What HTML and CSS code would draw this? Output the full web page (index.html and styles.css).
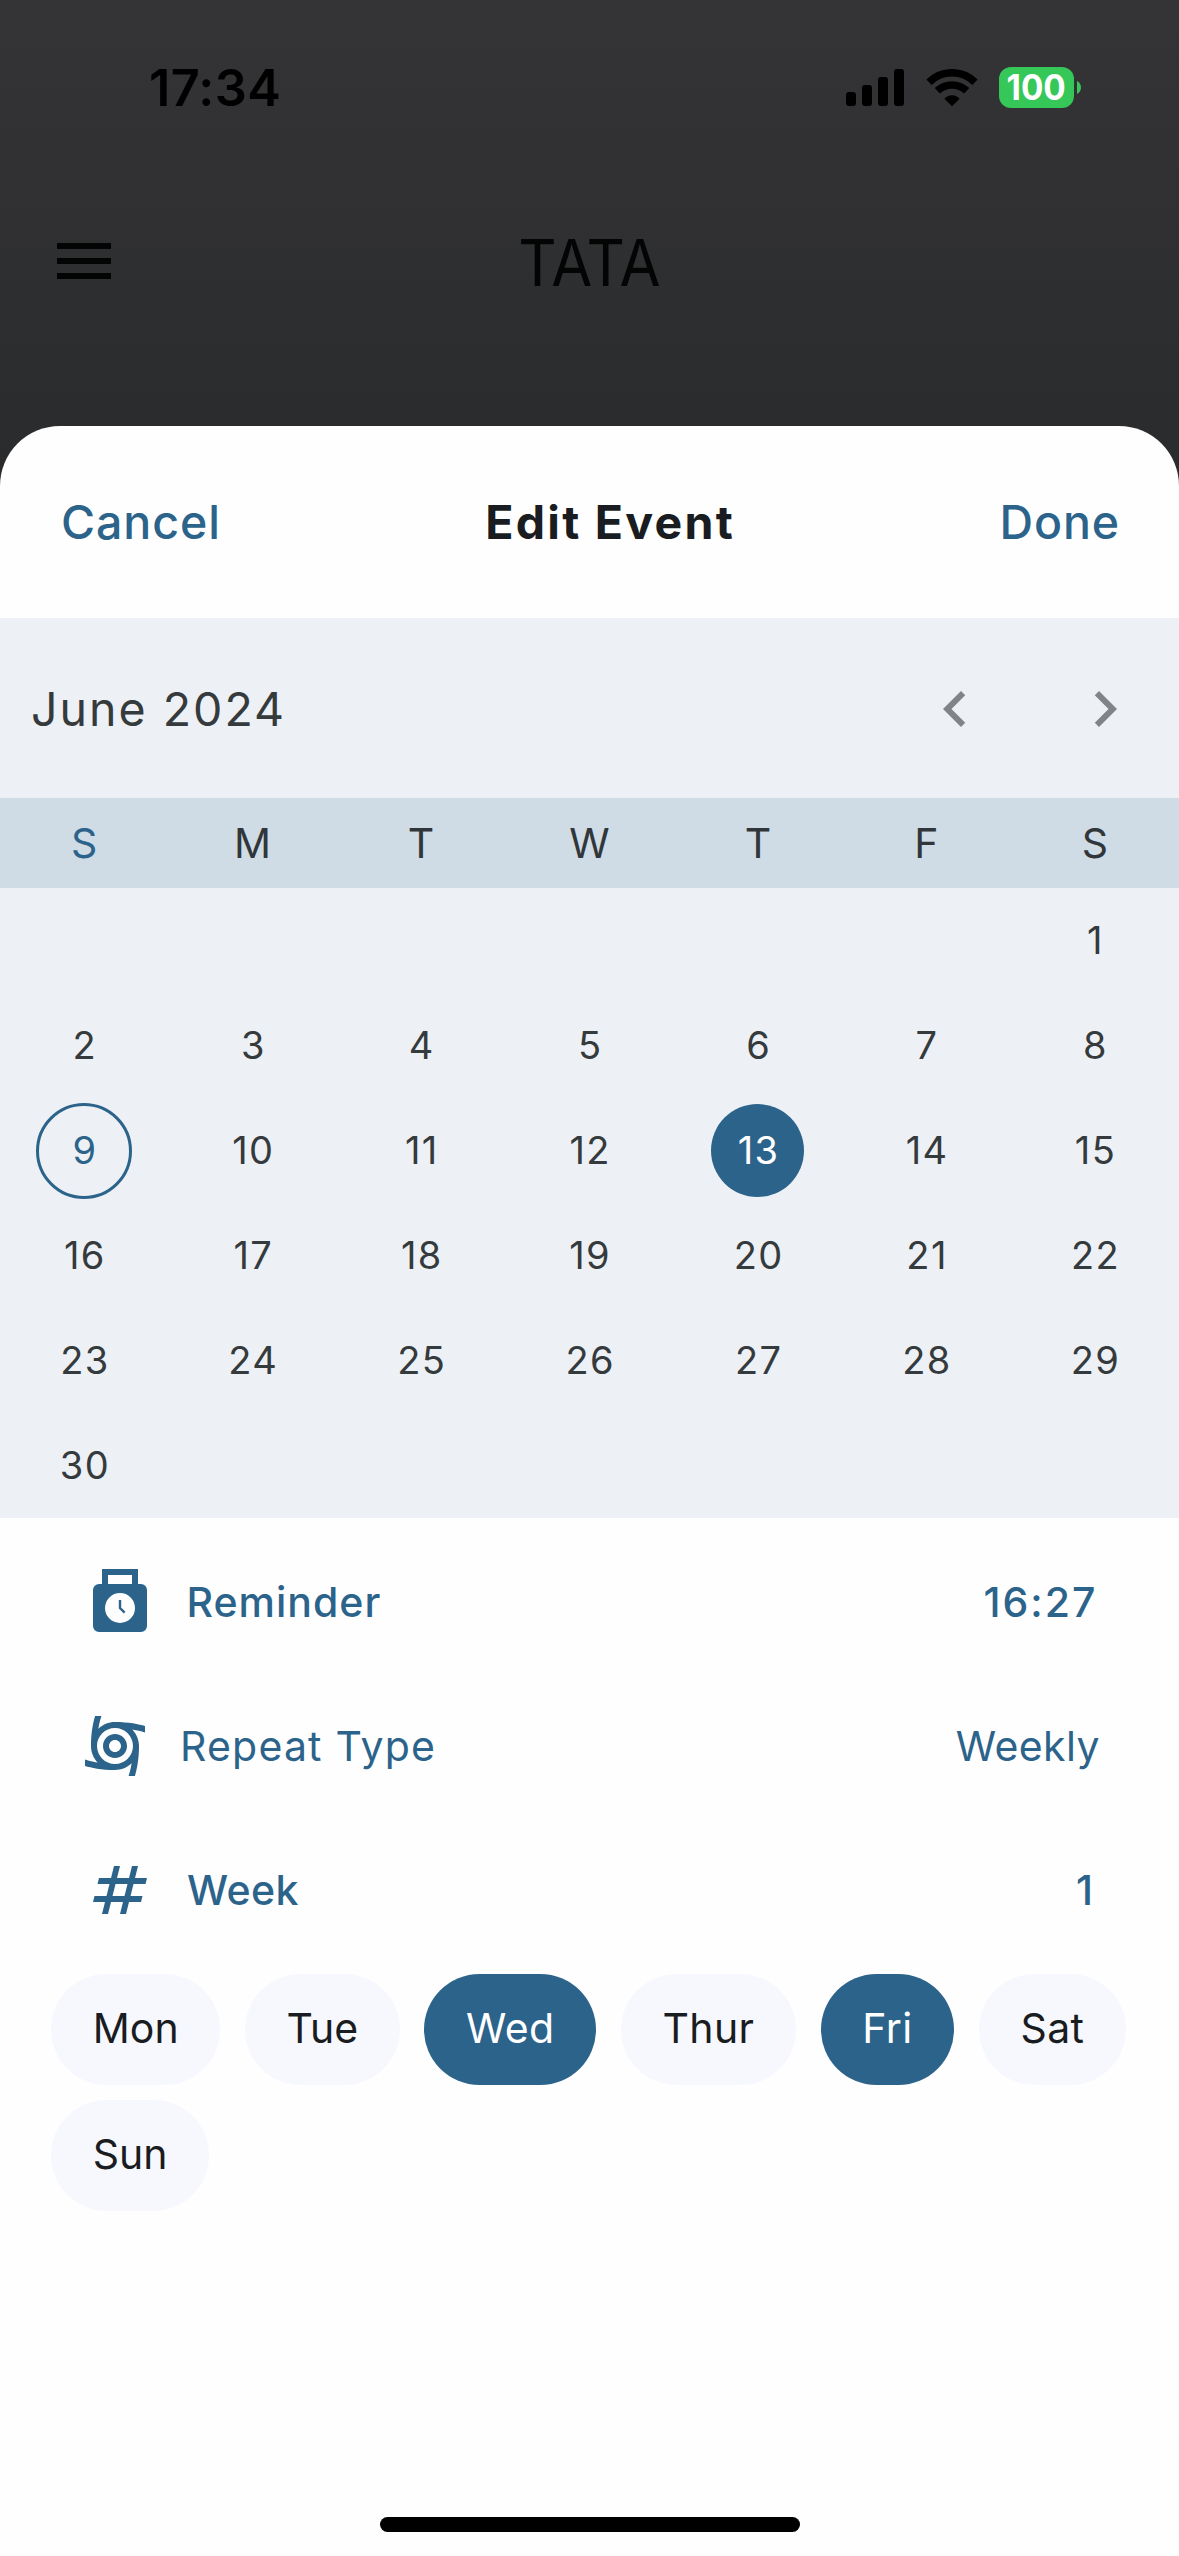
FILE: index.html
```html
<!DOCTYPE html>
<html lang="en">
<head>
<meta charset="utf-8">
<title>Edit Event</title>
<link rel="stylesheet" href="styles.css">
</head>
<body>
<div class="screen">
  <div class="status-bar">
    <span class="time">17:34</span>
    <div class="status-icons">
      <svg class="signal" width="58" height="38" viewBox="0 0 58 38">
        <rect x="0" y="23" width="10" height="14" rx="3"/>
        <rect x="16" y="16" width="10" height="21" rx="3"/>
        <rect x="32" y="8" width="10" height="29" rx="3"/>
        <rect x="48" y="0" width="10" height="37" rx="3"/>
      </svg>
      <svg class="wifi" width="52" height="38" viewBox="0 0 52 38">
        <path class="wifi-arc" d="M3 13.2C16 .6 36 .6 49 13.2M11.3 21.7C19.8 14 32.2 14 40.700 21.7"/>
        <path d="M26 37.300 18.400 29.700C22.500 25.200 29.500 25.200 33.600 29.700Z"/>
      </svg>
      <div class="battery"><span class="battery-level">100</span></div>
      <svg class="battery-nub" width="4" height="13" viewBox="0 0 4 13"><path d="M0 0C5.300 2.500 5.300 10.500 0 13Z"/></svg>
    </div>
  </div>
  <header class="app-bar">
    <svg class="menu" width="54" height="36" viewBox="0 0 54 36"><path d="M0 0h54v6H0zM0 15h54v6H0zM0 30h54v6H0z"/></svg>
    <h1 class="app-title">TATA</h1>
  </header>

  <main class="sheet">
    <div class="sheet-header">
      <span class="action">Cancel</span>
      <h2 class="sheet-title">Edit Event</h2>
      <span class="action">Done</span>
    </div>

    <section class="calendar">
      <div class="month-bar">
        <span class="month">June 2024</span>
        <div class="month-nav">
          <svg width="72" height="72" viewBox="0 0 24 24"><path d="M15.410 7.410 14 6l-6 6 6 6 1.410-1.410L10.830 12z"/></svg>
          <svg width="72" height="72" viewBox="0 0 24 24"><path d="M10 6 8.590 7.410 13.170 12l-4.580 4.590L10 18l6-6z"/></svg>
        </div>
      </div>
      <div class="weekdays">
        <span class="sunday">S</span><span>M</span><span>T</span><span>W</span><span>T</span><span>F</span><span>S</span>
      </div>
      <div class="days">
        <span class="day first">1</span>
        <span class="day">2</span><span class="day">3</span><span class="day">4</span><span class="day">5</span><span class="day">6</span><span class="day">7</span><span class="day">8</span>
        <span class="day mark"><span class="today">9</span></span><span class="day">10</span><span class="day">11</span><span class="day">12</span><span class="day mark"><span class="selected">13</span></span><span class="day">14</span><span class="day">15</span>
        <span class="day">16</span><span class="day">17</span><span class="day">18</span><span class="day">19</span><span class="day">20</span><span class="day">21</span><span class="day">22</span>
        <span class="day">23</span><span class="day">24</span><span class="day">25</span><span class="day">26</span><span class="day">27</span><span class="day">28</span><span class="day">29</span>
        <span class="day">30</span>
      </div>
    </section>

    <section class="settings">
      <div class="setting reminder">
        <svg class="icon" width="72" height="72" viewBox="0 0 24 24">
          <path fill-rule="evenodd" d="M18 1H6v5H5a2 2 0 0 0-2 2v12a2 2 0 0 0 2 2h14a2 2 0 0 0 2-2V8a2 2 0 0 0-2-2h-1zM8 3h8v3H8zM12 9a5 5 0 1 1 0 10 5 5 0 0 1 0-10z"/>
          <path class="hand" d="M12 11.300V14l1.550 1.550"/>
        </svg>
        <span class="label">Reminder</span>
        <span class="value">16:27</span>
      </div>
      <div class="setting repeat">
        <svg class="icon" width="72" height="72" viewBox="0 0 24 24">
          <path d="M12 8c-2.210 0-4 1.790-4 4s1.790 4 4 4 4-1.790 4-4-1.790-4-4-4zm0 6c-1.100 0-2-.9-2-2s.9-2 2-2 2 .9 2 2-.9 2-2 2z"/>
          <path d="M22 7.470V5.350C20.050 4.770 16.560 4 12 4 9.850 4 7.890 4.860 6.460 6.240 6.590 5.390 6.860 3.840 7.470 2H5.350C4.770 3.950 4 7.440 4 12c0 2.150.86 4.110 2.240 5.540-.85-.14-2.400-.4-4.240-1.010v2.120C3.950 19.230 7.440 20 12 20c2.150 0 4.110-.86 5.540-2.240-.14.85-.4 2.400-1.010 4.240h2.120C19.230 20.050 20 16.560 20 12c0-2.150-.86-4.110-2.240-5.540.85.13 2.400.4 4.240 1.010zM12 18c-3.310 0-6-2.690-6-6s2.690-6 6-6 6 2.690 6 6-2.690 6-6 6z"/>
        </svg>
        <span class="label">Repeat Type</span>
        <span class="value">Weekly</span>
      </div>
      <div class="setting interval">
        <svg class="icon" width="72" height="72" viewBox="0 0 24 24"><path d="M20.500 10 21 8h-4l1-4h-2l-1 4h-4l1-4h-2L9 8H5l-.5 2h4l-1 4h-4L3 16h4l-1 4h2l1-4h4l-1 4h2l1-4h4l.5-2h-4l1-4zm-7 4h-4l1-4h4z"/></svg>
        <span class="label">Week</span>
        <span class="value">1</span>
      </div>
    </section>

    <div class="chips">
      <span class="chip">Mon</span>
      <span class="chip">Tue</span>
      <span class="chip wide on">Wed</span>
      <span class="chip wide">Thur</span>
      <span class="chip wide on">Fri</span>
      <span class="chip wide">Sat</span>
      <span class="chip">Sun</span>
    </div>

    <div class="home-indicator"></div>
  </main>
</div>
</body>
</html>
```
FILE: styles.css
```css
* { box-sizing: border-box; }

body {
  margin: 0;
  font-family: Inter, "Liberation Sans", sans-serif;
  color: #191c20;
}

svg { display: block; flex: none; }

.screen {
  width: 1179px;
  height: 2556px;
  display: flex;
  flex-direction: column;
  background: linear-gradient(#343436 0, #303032 220px, #2b2d2e 350px, #2a2b2c 500px);
  overflow: hidden;
}

/* Status bar */
.status-bar {
  height: 176px;
  flex: none;
  display: flex;
  align-items: center;
  justify-content: space-between;
  padding: 0 98px 0 149px;
  color: #000;
}
.time { font-size: 50.5px; font-weight: 600; letter-spacing: 0.3px; padding-bottom: 1px; }
.status-icons { display: flex; align-items: center; padding-bottom: 1px; }
.wifi { margin-left: 21.5px; }
.wifi-arc { fill: none; stroke: #000; stroke-width: 7.6; }
.battery {
  width: 75px;
  height: 41px;
  margin-left: 21.5px;
  border-radius: 12px;
  background: #36c759;
  color: #fff;
  display: flex;
  align-items: center;
  justify-content: center;
}
.battery-level {
  font-size: 35px;
  font-weight: 700;
  line-height: 41px;
  transform: scaleX(0.95);
}
.battery-nub { margin-left: 3px; fill: #36c759; }

/* App bar behind the sheet */
.app-bar {
  height: 250px;
  flex: none;
  display: grid;
  grid-template-columns: 1fr auto 1fr;
  align-items: center;
  padding: 0 57px 79px;
}
.menu { fill: #030404; margin-bottom: 2px; }
.app-title {
  margin: 2px 0 0;
  font-size: 64px;
  font-weight: 400;
  letter-spacing: -0.6px;
  color: #030404;
  transform: scaleX(0.93);
}

/* Bottom sheet */
.sheet {
  flex: 1;
  display: flex;
  flex-direction: column;
  background: #fefefe;
  border-radius: 60px 60px 0 0;
  overflow: hidden;
}
.sheet-header {
  height: 192px;
  flex: none;
  display: flex;
  align-items: center;
  justify-content: space-between;
  padding: 0 59px 0 61px;
}
.action {
  font-size: 46.5px;
  font-weight: 500;
  letter-spacing: 0.9px;
  color: #2c638b;
}
.sheet-title {
  margin: 0;
  font-size: 46.5px;
  font-weight: 700;
  letter-spacing: 2.25px;
}

/* Calendar */
.calendar { flex: none; background: #edf1f5; color: #353a3d; }
.month-bar {
  height: 180px;
  display: flex;
  align-items: center;
  justify-content: space-between;
  padding: 1px 38.5px 0 31px;
}
.month { font-size: 46.5px; letter-spacing: 2px; }
.month-nav { display: flex; gap: 78px; fill: #808486; }
.weekdays {
  height: 90px;
  display: grid;
  grid-template-columns: repeat(7, 1fr);
  align-items: center;
  text-align: center;
  font-size: 41px;
  background: #cfdbe5;
  color: #30363a;
}
.sunday { color: #2c638b; }
.days {
  display: grid;
  grid-template-columns: repeat(7, 1fr);
  grid-auto-rows: 105px;
  font-size: 38px;
  letter-spacing: 1.4px;
}
.day { display: flex; align-items: center; justify-content: center; padding: 0 0 2px 1.4px; }
.mark { padding: 0; }
.first { grid-column: 7; }
.today, .selected {
  display: flex;
  align-items: center;
  justify-content: center;
  padding: 0 0 2px 1.4px;
  border-radius: 50%;
}
.today { width: 96px; height: 96px; border: 3px solid #2c638b; color: #2c638b; }
.selected { width: 93px; height: 93px; background: #2c638b; color: #fff; }

/* Event settings */
.settings { flex: none; padding-top: 12px; color: #2c638b; }
.setting {
  height: 144px;
  display: flex;
  align-items: center;
  padding-left: 84px;
  font-size: 41px;
  font-weight: 500;
}
.icon { fill: currentColor; margin-right: 30.5px; }
.hand { fill: none; stroke: currentColor; stroke-width: 0.8; }
.value { margin-left: auto; }
.reminder { padding-right: 81.5px; letter-spacing: 1px; }
.reminder .value { letter-spacing: 2px; }
.repeat { padding-left: 79px; padding-right: 79px; font-weight: 400; letter-spacing: 1.2px; }
.repeat .icon { margin-right: 29px; }
.repeat .value { letter-spacing: 0.4px; }
.interval { padding-right: 85.5px; letter-spacing: 0.4px; }
.interval .icon { margin-right: 31px; }

/* Weekday chips */
.chips {
  flex: none;
  display: flex;
  flex-wrap: wrap;
  gap: 15px 24.3px;
  padding: 12px 44px 0 51px;
}
.chip {
  height: 111px;
  display: flex;
  align-items: center;
  padding: 0 41.8px 3px;
  border-radius: 55.5px;
  background: #f7f8fe;
  font-size: 41px;
}
.wide { letter-spacing: 0.4px; }
.on { background: #2c638b; color: #fff; }

.home-indicator {
  width: 420px;
  height: 15px;
  margin: auto auto 24px;
  border-radius: 7.5px;
  background: #000;
}
```
